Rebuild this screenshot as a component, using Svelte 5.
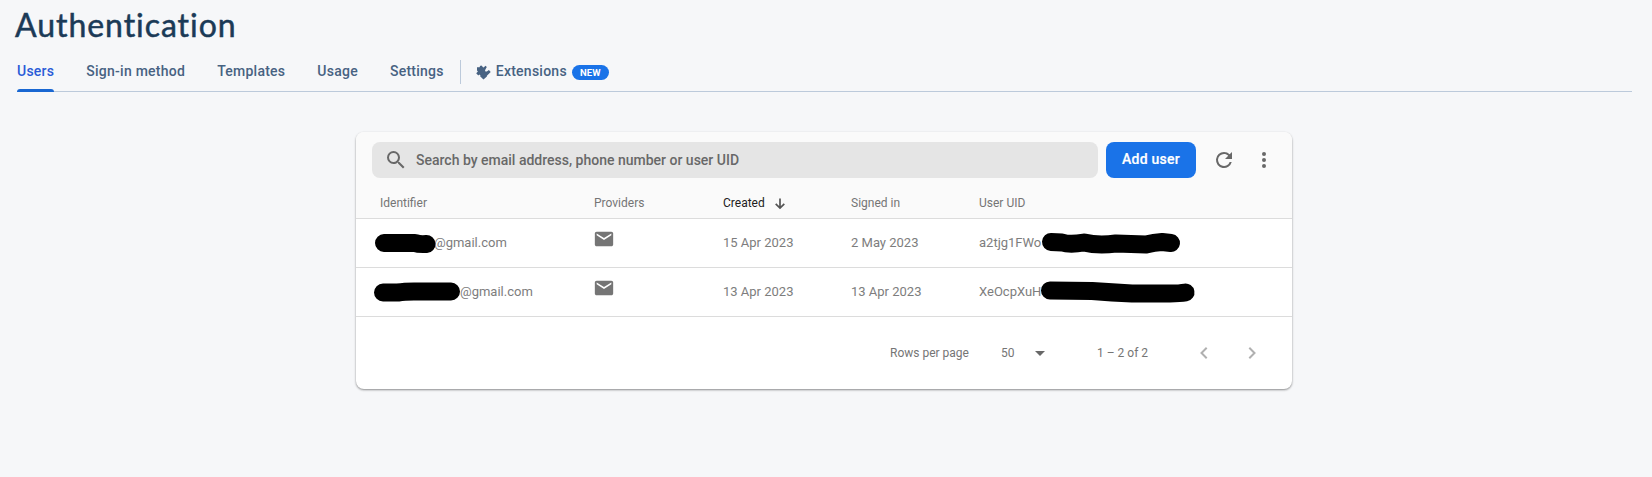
<script>
  const tabs = ['Users', 'Sign-in method', 'Templates', 'Usage', 'Settings'];
  const users = [
    {
      created: '15 Apr 2023', signed: '2 May 2023', uid: 'a2tjg1FWo',
      nameWidth: 60, nameShift: -1,
      namePath: 'M10 15H41Q45 16.5 52.5 16',
      uidPath: 'M9 14L20 14.5Q28 17 42 14.5Q56 18 74 15.5L104 16.5Q112 14.5 120 14L129 15'
    },
    {
      created: '13 Apr 2023', signed: '13 Apr 2023', uid: 'XeOcpXuH',
      nameWidth: 86, nameShift: -1,
      namePath: 'M9 15.5H24Q30 14.5 40 14.5H64L77 14.5',
      uidPath: 'M8 13.5L50 14Q70 15.5 90 16.5H128Q138 16.5 143.5 15.5'
    }
  ];
</script>

<main>
  <h1>Authentication</h1>
  <nav>
    {#each tabs as tab, i}
      <a class:active={i === 0}>{tab}</a>
    {/each}
    <span class="divider"></span>
    <div class="extensions">
      <svg width="15" height="15" viewBox="0 0 15 15"><path fill="#476282" d="M1 2.3H3.6Q3.7.6 5.1.6Q6.5.6 6.6 2.1L7.6 2.6L9.5.7L10.8 2L9.4 4.4Q8.6 5.8 9.5 6.4Q10.3 7 11.5 5.9L12.9 5.1L14.7 6.9L11.9 9.7L10.9 10.7V11.6L7.5 14.6L4.1 11.3L4.5 10.4L3.3 9.6L2.3 10.4L.2 8.2L1.9 6.5L1 5.5Z"/></svg>
      <span>Extensions</span><b>NEW</b>
    </div>
  </nav>

  <section>
    <div class="toolbar">
      <div class="search">
        <svg width="24" height="24" viewBox="0 0 24 24"><path fill="#686868" d="M15.5 14h-.79l-.28-.27A6.47 6.47 0 0 0 16 9.5 6.5 6.5 0 1 0 9.5 16c1.61 0 3.09-.59 4.23-1.57l.27.28v.79l5 4.99L20.49 19l-4.99-5zm-6 0C7.01 14 5 11.99 5 9.5S7.01 5 9.5 5 14 7.01 14 9.5 11.99 14 9.5 14z"/></svg>
        <span>Search by email address, phone number or user UID</span>
      </div>
      <button>Add user</button>
      <svg class="refresh" width="24" height="24" viewBox="0 0 24 24"><path fill="#686868" d="M17.65 6.35A7.96 7.96 0 0 0 12 4a8 8 0 1 0 7.73 10h-2.08A6 6 0 1 1 12 6c1.66 0 3.14.69 4.22 1.78L13 11h7V4l-2.35 2.35z"/></svg>
      <svg class="more" width="24" height="24" viewBox="0 0 24 24"><g fill="#686868"><circle cx="12" cy="6" r="2"/><circle cx="12" cy="12" r="2"/><circle cx="12" cy="18" r="2"/></g></svg>
    </div>
    <div class="row head">
      <span class="identifier">Identifier</span><span>Providers</span>
      <span class="sorted">Created
        <svg width="12" height="12" viewBox="0 0 12 12"><path d="M6 .5V10M1.7 5.8L6 10.1L10.3 5.8" fill="none" stroke="#555" stroke-width="1.7"/></svg>
      </span>
      <span>Signed in</span><span>User UID</span>
    </div>
    {#each users as user}
      <div class="row body">
        <span class="email">
          <svg style="width:{user.nameWidth}px;margin-left:{user.nameShift}px" height="31"><path class="mark" d={user.namePath}/></svg><span>@gmail.com</span>
        </span>
        <span class="provider"><svg width="22" height="22" viewBox="0 0 24 24"><path fill="#757575" d="M20 4H4c-1.1 0-2 .9-2 2v12c0 1.1.9 2 2 2h16c1.1 0 2-.9 2-2V6c0-1.1-.9-2-2-2zm0 4l-8 5-8-5V6l8 5 8-5v2z"/></svg></span>
        <span>{user.created}</span><span>{user.signed}</span>
        <span class="uid"><span>{user.uid}</span><svg width="156" height="31"><path class="mark" d={user.uidPath}/></svg></span>
      </div>
    {/each}
    <footer>
      <span class="rows">Rows per page</span><span class="size">50</span>
      <svg class="caret" width="10" height="5" viewBox="0 0 10 5"><path fill="#686868" d="M0 0H10L5 5Z"/></svg>
      <span class="range">1 – 2 of 2</span>
      <svg class="prev" width="8" height="12" viewBox="0 0 8 12"><path d="M6.7.8L1.5 6L6.7 11.2"/></svg>
      <svg class="next" width="8" height="12" viewBox="0 0 8 12"><path d="M1.3.8L6.5 6L1.3 11.2"/></svg>
    </footer>
  </section>
</main>

<style>
  :global(body) { background: #f6f7f9; }
  main { box-sizing: border-box; height: 477px; padding: 4px 20px 0 16px; font-family: Roboto, sans-serif; color: #757575; overflow: hidden; }
  svg { display: block; flex: none; }
  h1 { margin: 0 0 0 -1px; height: 42px; line-height: 42px; font-family: Lato, sans-serif; font-size: 32px; font-weight: 400; letter-spacing: .95px; -webkit-text-stroke: .5px #1b3a57; color: #1b3a57; white-space: nowrap; }
  nav { box-sizing: border-box; height: 46px; margin-left: 1px; border-bottom: 1px solid #bccadb; display: flex; gap: 32px; font-size: 14px; font-weight: 500; letter-spacing: .25px; color: #476282; white-space: nowrap; }
  nav a { line-height: 51px; height: 46px; position: relative; }
  .active { color: #2a5bd7; }
  .active::after { content: ''; position: absolute; left: 0; right: 0; bottom: 0; height: 3px; border-radius: 3px 3px 0 0; background: #1967d2; }
  .divider { width: 1px; height: 24px; margin: 14px 0 0 -16px; background: #bccadb; }
  .extensions { display: flex; align-items: center; height: 50px; margin-left: -17px; }
  .extensions svg { margin-top: 2px; }
  .extensions > span { margin: 0 5px; }
  .extensions b { width: 37px; height: 15px; margin-top: 2px; line-height: 15px; border-radius: 8px; background: #1a73e8; color: #fff; font-size: 9.5px; text-align: center; letter-spacing: .2px; }
  section { width: 936px; height: 257px; margin: 40px 0 0 340px; border-radius: 8px; background: #fff; box-shadow: 0 1px 2px #0005, 0 1px 3px #0002; overflow: hidden; }
  .toolbar { box-sizing: border-box; height: 56px; padding: 10px 16px; background: #fafafa; display: flex; align-items: flex-start; }
  .search { width: 726px; height: 36px; border-radius: 8px; background: #e5e5e5; display: flex; align-items: center; font-size: 14px; font-weight: 500; color: #686868; white-space: nowrap; }
  .search svg { margin: 0 8px 0 12px; }
  button { width: 90px; height: 36px; margin-left: 8px; padding: 0 0 2px; border: 0; border-radius: 8px; background: #1a73e8; color: white; font: 500 14px Roboto, sans-serif; letter-spacing: .25px; -webkit-text-stroke: .2px white; }
  .refresh { margin: 6px 0 0 16px; }
  .more { margin: 6px 0 0 16px; }
  .row { box-sizing: border-box; height: 49px; padding-left: 19px; border-bottom: 1px solid #dcdcdc; display: grid; grid-template-columns: 219px 129px 128px 128px 1fr; align-items: center; font-size: 13px; white-space: nowrap; }
  .row.head { height: 31px; padding-bottom: 1px; background: #fafafa; font-size: 12px; }
  .row.body { padding-bottom: 2px; color: #7d7d7d; }
  .identifier { padding-left: 5px; }
  .sorted { display: flex; align-items: center; color: #212121; }
  .sorted svg { margin: 2px 0 0 9px; }
  .email, .uid { display: flex; align-items: center; }
  .email svg, .uid svg { overflow: visible; position: relative; top: 1px; }
  .provider { padding-bottom: 6px; }
  .provider svg { margin-left: -1px; }
  .uid > span { width: 63px; }
  .mark { fill: none; stroke: #000; stroke-width: 18; stroke-linecap: round; stroke-linejoin: round; }
  footer { height: 72px; display: flex; align-items: center; font-size: 12px; white-space: nowrap; }
  .rows { width: 111px; margin-left: 534px; }
  .size { width: 34px; }
  .caret { width: 10px; }
  .range { width: 103px; margin-left: 52px; }
  .next { margin-left: 40px; }
  .prev path, .next path { fill: none; stroke: #b0b0b0; stroke-width: 2; }
</style>
